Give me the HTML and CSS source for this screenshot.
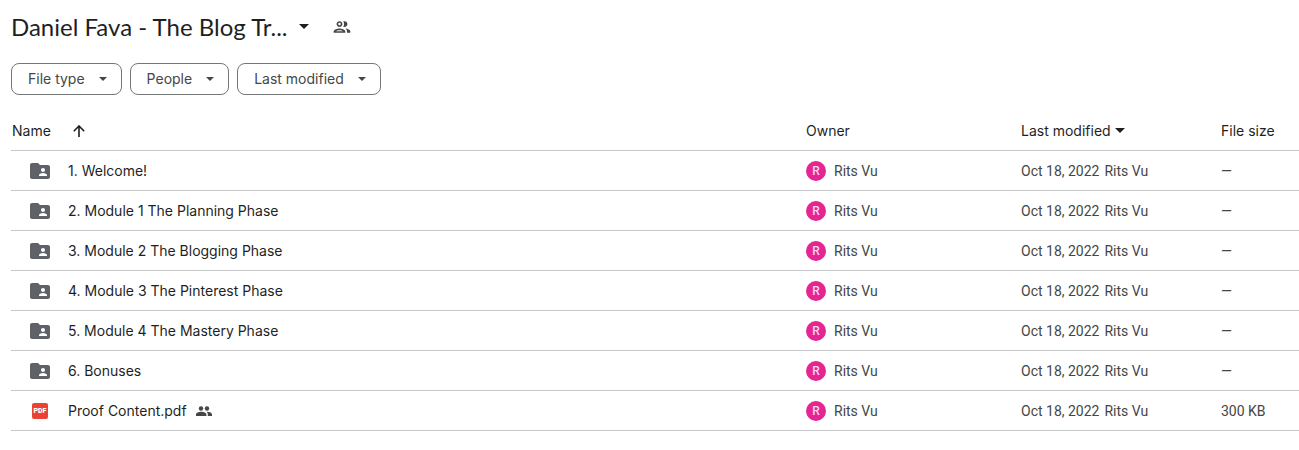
FILE: index.html
```
<!DOCTYPE html>
<html lang="en">
<head>
<meta charset="utf-8">
<title>Daniel Fava - The Blog Tr...</title>
<link rel="stylesheet" href="styles.css">
</head>
<body>
<svg class="sprite" aria-hidden="true">
  <symbol id="caret" viewBox="0 0 10 5"><path d="M0 0h10L5 5z"/></symbol>
  <symbol id="folder" viewBox="0 0 24 24"><path d="M20 6h-8l-2-2H4c-1.1 0-2 .9-2 2v12c0 1.1.9 2 2 2h16c1.100 0 2-.9 2-2V8c0-1.100-.9-2-2-2zm-5 3c1.100 0 2 .9 2 2s-.9 2-2 2-2-.9-2-2 .9-2 2-2zm4 8h-8v-1c0-1.330 2.670-2 4-2s4 .67 4 2v1z"/></symbol>
</svg>
<main class="drive">
  <header class="title-bar">
    <h1 class="title"><button class="title-button" type="button">Daniel Fava - The Blog Tr...<svg class="caret"><use href="#caret"/></svg></button></h1>
    <button class="share" type="button" aria-label="Manage access">
      <svg class="people-outline" viewBox="0 0 24 24"><path d="M9 12c1.930 0 3.500-1.570 3.500-3.500S10.930 5 9 5 5.500 6.570 5.500 8.500 7.070 12 9 12zm0-5c.83 0 1.500.67 1.500 1.500S9.830 10 9 10s-1.500-.67-1.500-1.500S8.170 7 9 7zm0 6.750c-2.340 0-7 1.170-7 3.500V19h14v-1.750c0-2.330-4.660-3.500-7-3.500zM4.340 17c.84-.58 2.870-1.250 4.660-1.250s3.820.67 4.660 1.250H4.340zm11.700-3.190c1.160.84 1.960 1.960 1.960 3.440V19h4v-1.750c0-2.020-3.500-3.170-5.960-3.440zM15 12c1.930 0 3.500-1.570 3.500-3.500S16.930 5 15 5c-.54 0-1.040.13-1.500.35.63.89 1 1.980 1 3.150s-.37 2.260-1 3.150c.46.22.96.35 1.500.35z"/></svg>
    </button>
  </header>
  <div class="filters">
    <button class="chip" type="button">File type<svg class="caret small"><use href="#caret"/></svg></button>
    <button class="chip" type="button">People<svg class="caret small"><use href="#caret"/></svg></button>
    <button class="chip" type="button">Last modified<svg class="caret small"><use href="#caret"/></svg></button>
  </div>
  <table class="files">
    <colgroup><col><col class="col-owner"><col class="col-modified"><col class="col-size"></colgroup>
    <thead>
      <tr>
        <th scope="col"><div class="cell heading">Name<svg class="arrow" viewBox="0 0 12 12"><path d="M6 12V1.500M.8 6.200L6 1l5.200 5.200"/></svg></div></th>
        <th scope="col">Owner</th>
        <th scope="col"><div class="cell sort">Last modified<svg class="caret"><use href="#caret"/></svg></div></th>
        <th scope="col">File size</th>
      </tr>
    </thead>
    <tbody>
      <tr><td><div class="cell name"><svg class="icon"><use href="#folder"/></svg>1. Welcome!</div></td><td><div class="cell owner"><span class="avatar">R</span>Rits Vu</div></td><td><div class="cell modified"><span>Oct 18, 2022</span><span>Rits Vu</span></div></td><td>—</td></tr>
      <tr><td><div class="cell name"><svg class="icon"><use href="#folder"/></svg>2. Module 1 The Planning Phase</div></td><td><div class="cell owner"><span class="avatar">R</span>Rits Vu</div></td><td><div class="cell modified"><span>Oct 18, 2022</span><span>Rits Vu</span></div></td><td>—</td></tr>
      <tr><td><div class="cell name"><svg class="icon"><use href="#folder"/></svg>3. Module 2 The Blogging Phase</div></td><td><div class="cell owner"><span class="avatar">R</span>Rits Vu</div></td><td><div class="cell modified"><span>Oct 18, 2022</span><span>Rits Vu</span></div></td><td>—</td></tr>
      <tr><td><div class="cell name"><svg class="icon"><use href="#folder"/></svg>4. Module 3 The Pinterest Phase</div></td><td><div class="cell owner"><span class="avatar">R</span>Rits Vu</div></td><td><div class="cell modified"><span>Oct 18, 2022</span><span>Rits Vu</span></div></td><td>—</td></tr>
      <tr><td><div class="cell name"><svg class="icon"><use href="#folder"/></svg>5. Module 4 The Mastery Phase</div></td><td><div class="cell owner"><span class="avatar">R</span>Rits Vu</div></td><td><div class="cell modified"><span>Oct 18, 2022</span><span>Rits Vu</span></div></td><td>—</td></tr>
      <tr><td><div class="cell name"><svg class="icon"><use href="#folder"/></svg>6. Bonuses</div></td><td><div class="cell owner"><span class="avatar">R</span>Rits Vu</div></td><td><div class="cell modified"><span>Oct 18, 2022</span><span>Rits Vu</span></div></td><td>—</td></tr>
      <tr><td><div class="cell name"><span class="icon pdf-box"><span class="pdf">PDF</span></span>Proof Content.pdf<svg class="shared" viewBox="0 0 16 10"><circle cx="5" cy="2.500" r="2.200"/><circle cx="11" cy="2.500" r="2.200"/><path d="M0 10V8.300C0 6.500 3.200 5.700 5.200 5.700s5.200.8 5.200 2.600V10zM11.800 10V8.300c0-1-.5-1.800-1.300-2.500 2.200 0 5.500.8 5.500 2.500V10z"/></svg></div></td><td><div class="cell owner"><span class="avatar">R</span>Rits Vu</div></td><td><div class="cell modified"><span>Oct 18, 2022</span><span>Rits Vu</span></div></td><td>300 KB</td></tr>
    </tbody>
  </table>
</main>
</body>
</html>
```
FILE: styles.css
```
* { box-sizing: border-box; }
body {
  margin: 0;
  background: #fff;
  color: #1f1f1f;
  font: 14px/20px "Google Sans", Inter, Roboto, sans-serif;
}
button {
  margin: 0;
  border: 0;
  background: none;
  color: inherit;
  font: inherit;
  cursor: pointer;
}
svg { fill: currentColor; flex: none; }
.sprite { position: absolute; width: 0; height: 0; }
.drive { padding-left: 11px; }
.title-bar {
  display: flex;
  align-items: center;
  gap: 23px;
  padding-top: 10px;
  height: 43px;
}
.title { margin: 0; font: 400 24px/32px "Google Sans", Lato, Roboto, sans-serif; }
.title-button { display: flex; align-items: center; gap: 12px; padding: 0; }
.caret { width: 10px; height: 5px; }
.caret.small { width: 8px; height: 4px; }
.share { display: flex; padding: 0; color: #444746; }
.people-outline { width: 20px; height: 20px; }
.filters { display: flex; gap: 8px; margin-top: 20px; }
.chip {
  display: flex;
  align-items: center;
  gap: 14px;
  height: 32px;
  padding: 0 14px 0 16px;
  border: 1px solid #747775;
  border-radius: 8px;
  color: #444746;
}
.files {
  width: 100%;
  margin-top: 16px;
  border-collapse: separate;
  border-spacing: 0;
  table-layout: fixed;
}
.col-owner { width: 215px; }
.col-modified { width: 200px; }
.col-size { width: 78px; }
.files th, .files td {
  height: 40px;
  padding: 0;
  border-bottom: 1px solid #c7c7c7;
  text-align: left;
  white-space: nowrap;
}
.files th { font-weight: 400; }
.files td { color: #444746; font-family: "Google Sans", Roboto, sans-serif; }
.cell { display: flex; align-items: center; }
.heading { gap: 22px; padding-left: 1px; }
.arrow { width: 12px; height: 12px; fill: none; stroke: currentColor; stroke-width: 1.6; }
.sort { gap: 4px; }
.name {
  padding-left: 17px;
  color: #1f1f1f;
  font-family: "Google Sans", Inter, sans-serif;
}
.icon { width: 24px; height: 24px; margin-right: 16px; color: #5f6368; }
.pdf-box { display: flex; align-items: center; justify-content: center; }
.pdf {
  width: 16px;
  border-radius: 2px;
  background: #ea4335;
  color: #fff;
  font: 900 7px/16px Roboto, sans-serif;
  text-align: center;
}
.shared { width: 16px; height: 10px; margin-left: 9px; color: #444746; }
.owner { gap: 8px; }
.avatar {
  width: 20px;
  border-radius: 50%;
  background: #e52592;
  color: #f9d3e9;
  font: 500 12px/20px Roboto, sans-serif;
  text-align: center;
}
.modified { gap: 5px; }
```
